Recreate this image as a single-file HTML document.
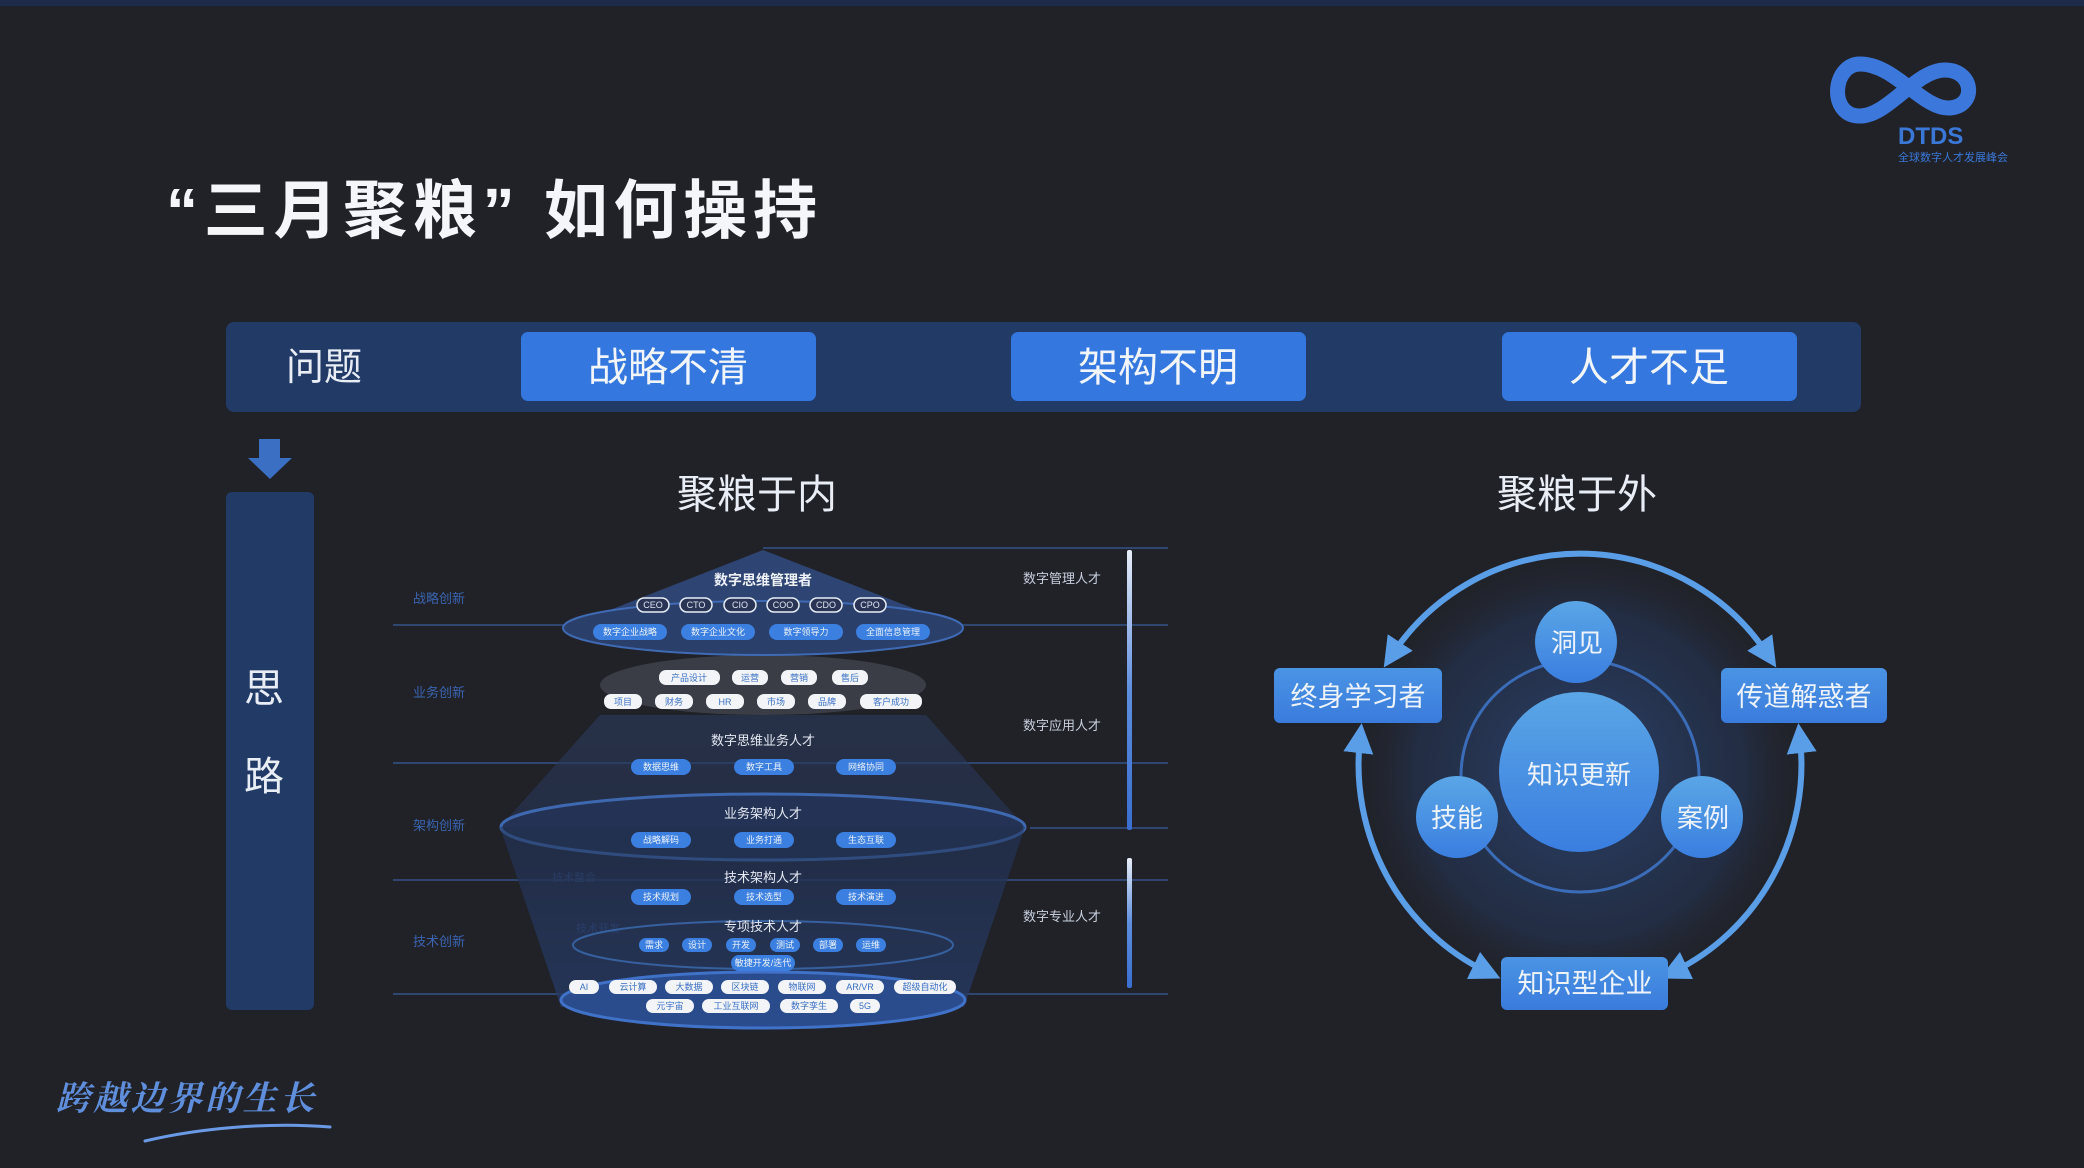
<!DOCTYPE html>
<html><head><meta charset="utf-8">
<style>
html,body{margin:0;padding:0;background:#212228;}
body{width:2084px;height:1168px;overflow:hidden;font-family:"Liberation Sans","Noto Sans CJK SC",sans-serif;}
svg{display:block}
</style></head><body>
<svg width="2084" height="1168" viewBox="0 0 2084 1168" xmlns="http://www.w3.org/2000/svg" font-family="Liberation Sans, Noto Sans CJK SC, sans-serif">
<defs>
<radialGradient id="glow" cx="50%" cy="50%" r="50%">
<stop offset="0" stop-color="#2c4470" stop-opacity="0.9"/>
<stop offset="0.7" stop-color="#243556" stop-opacity="0.6"/>
<stop offset="1" stop-color="#212228" stop-opacity="0"/>
</radialGradient>
<linearGradient id="ball" x1="0" y1="0" x2="0" y2="1">
<stop offset="0" stop-color="#5aa6e6"/><stop offset="1" stop-color="#3a7ee0"/>
</linearGradient>
<linearGradient id="box" x1="0" y1="0" x2="0" y2="1">
<stop offset="0" stop-color="#4a94e4"/><stop offset="1" stop-color="#3a7bdc"/>
</linearGradient>
<linearGradient id="vbar" x1="0" y1="0" x2="0" y2="1">
<stop offset="0" stop-color="#e8eef8"/><stop offset="0.5" stop-color="#5f8ede"/><stop offset="1" stop-color="#3a6ed0"/>
</linearGradient>
<linearGradient id="pyr" x1="0" y1="0" x2="0" y2="1">
<stop offset="0" stop-color="#2a3a5c"/><stop offset="0.5" stop-color="#243254"/><stop offset="1" stop-color="#2d4a86"/>
</linearGradient>
<marker id="ah" viewBox="0 0 10 10" refX="5" refY="5" markerWidth="5" markerHeight="5" orient="auto-start-reverse">
<path d="M0,0 L10,5 L0,10 z" fill="#5a9ee8"/>
</marker>
</defs>

<rect x="0" y="0" width="2084" height="6" fill="#1d2b4a"/>

<!-- Title -->
<text x="166" y="233" font-size="64" font-weight="bold" fill="#f4f6fa" textLength="651" lengthAdjust="spacing">“三月聚粮” 如何操持</text>

<!-- Logo -->
<path d="M1860,64 C1833,64 1828,114 1858,116 C1887,118 1915,70 1945,70 C1974,70 1977,106 1950,108 C1923,110 1895,64 1860,64 Z" fill="none" stroke="#3c78dc" stroke-width="15"/>
<text x="1898" y="144" font-size="24" font-weight="bold" fill="#3a78d8">DTDS</text>
<text x="1898" y="161" font-size="11" fill="#3a78d8">全球数字人才发展峰会</text>

<!-- Problem bar -->
<rect x="226" y="322" width="1635" height="90" rx="8" fill="#213a66"/>
<text x="286" y="380" font-size="38" fill="#e8edf6">问题</text>
<rect x="521" y="332" width="295" height="69" rx="7" fill="#3477de"/>
<text x="668" y="381" font-size="40" fill="#f2f5fb" text-anchor="middle">战略不清</text>
<rect x="1011" y="332" width="295" height="69" rx="7" fill="#3477de"/>
<text x="1158" y="381" font-size="40" fill="#f2f5fb" text-anchor="middle">架构不明</text>
<rect x="1502" y="332" width="295" height="69" rx="7" fill="#3477de"/>
<text x="1649" y="381" font-size="40" fill="#f2f5fb" text-anchor="middle">人才不足</text>

<!-- down arrow and pillar -->
<path d="M259,439 L280,439 L280,458 L292,458 L270,479 L248,458 L259,458 Z" fill="#3a6fc4"/>
<rect x="226" y="492" width="88" height="518" rx="6" fill="#213a66"/>
<text x="264" y="702" font-size="40" fill="#e8edf6" text-anchor="middle">思</text>
<text x="264" y="790" font-size="40" fill="#e8edf6" text-anchor="middle">路</text>

<text x="757" y="508" font-size="40" fill="#e8edf6" text-anchor="middle">聚粮于内</text>
<text x="1577" y="508" font-size="40" fill="#e8edf6" text-anchor="middle">聚粮于外</text>

<!-- Pyramid guide lines -->
<g stroke="#2e4670" stroke-width="2">
<line x1="763" y1="548" x2="1168" y2="548"/>
<line x1="393" y1="625" x2="1168" y2="625"/>
<line x1="393" y1="763" x2="1168" y2="763"/>
<line x1="1030" y1="828" x2="1168" y2="828"/>
<line x1="393" y1="880" x2="1168" y2="880"/>
<line x1="393" y1="994" x2="1168" y2="994"/>
</g>
<rect x="1127" y="550" width="5" height="280" rx="2" fill="url(#vbar)"/>
<rect x="1127" y="858" width="5" height="130" rx="2" fill="url(#vbar)"/>
<g font-size="13" fill="#c8d0de">
<text x="1023" y="583">数字管理人才</text>
<text x="1023" y="730">数字应用人才</text>
<text x="1023" y="921">数字专业人才</text>
</g>
<g font-size="13" fill="#3a64b0">
<text x="413" y="603">战略创新</text>
<text x="413" y="697">业务创新</text>
<text x="413" y="830">架构创新</text>
<text x="413" y="946">技术创新</text>
<text x="530" y="828" font-size="11">业务整合</text>
<text x="552" y="881" font-size="11">技术整合</text>
<text x="576" y="932" font-size="11">技术开发</text>
</g>

<!-- pyramid body -->
<path d="M600,715 L926,715 L1025,827 L964,1007 L561,1007 L500,827 Z" fill="url(#pyr)" opacity="0.6"/>
<ellipse cx="763" cy="827" rx="262" ry="33" fill="#243355" stroke="#3e68b0" stroke-width="3"/>
<path d="M500,827 L561,1007 L964,1007 L1025,827" fill="#22304e" opacity="0.5"/>
<ellipse cx="763" cy="1000" rx="202" ry="28" fill="#2b4c8c" stroke="#3f72c8" stroke-width="3"/>
<ellipse cx="763" cy="945" rx="190" ry="24" fill="none" stroke="#36609e" stroke-width="2"/>
<ellipse cx="763" cy="685" rx="163" ry="30" fill="#3a3d46"/>
<path d="M763,550 L564,628 L964,628 Z" fill="#2e4472"/>
<ellipse cx="763" cy="628" rx="200" ry="27" fill="#2a3f6a" stroke="#3f6ab4" stroke-width="2"/>
<text x="763" y="585" font-size="14" font-weight="bold" fill="#eef2f8" text-anchor="middle">数字思维管理者</text>
<text x="763" y="745" font-size="13" fill="#e4e9f2" text-anchor="middle">数字思维业务人才</text>
<text x="763" y="818" font-size="13" fill="#e4e9f2" text-anchor="middle">业务架构人才</text>
<text x="763" y="882" font-size="13" fill="#e4e9f2" text-anchor="middle">技术架构人才</text>
<text x="763" y="931" font-size="13" fill="#e4e9f2" text-anchor="middle">专项技术人才</text>

<g font-size="9" text-anchor="middle">
<g fill="#2a3556" stroke="#e8eef8" stroke-width="1.5">
<rect x="637" y="598" width="32" height="14" rx="7"/><rect x="680" y="598" width="32" height="14" rx="7"/><rect x="724" y="598" width="32" height="14" rx="7"/><rect x="767" y="598" width="32" height="14" rx="7"/><rect x="810" y="598" width="32" height="14" rx="7"/><rect x="854" y="598" width="32" height="14" rx="7"/>
</g>
<g fill="#dfe6f2"><text x="653" y="608">CEO</text><text x="696" y="608">CTO</text><text x="740" y="608">CIO</text><text x="783" y="608">COO</text><text x="826" y="608">CDO</text><text x="870" y="608">CPO</text></g>
<g fill="#3b7fe0"><rect x="593" y="624" width="74" height="16" rx="8"/><rect x="681" y="624" width="74" height="16" rx="8"/><rect x="769" y="624" width="74" height="16" rx="8"/><rect x="856" y="624" width="74" height="16" rx="8"/></g>
<g fill="#eef3fb"><text x="630" y="635">数字企业战略</text><text x="718" y="635">数字企业文化</text><text x="806" y="635">数字领导力</text><text x="893" y="635">全面信息管理</text></g>
<g fill="#f2f4f8"><rect x="659" y="670" width="61" height="15" rx="7"/><rect x="732" y="670" width="36" height="15" rx="7"/><rect x="781" y="670" width="36" height="15" rx="7"/><rect x="832" y="670" width="36" height="15" rx="7"/>
<rect x="604" y="694" width="38" height="15" rx="7"/><rect x="655" y="694" width="38" height="15" rx="7"/><rect x="706" y="694" width="38" height="15" rx="7"/><rect x="757" y="694" width="38" height="15" rx="7"/><rect x="808" y="694" width="38" height="15" rx="7"/><rect x="860" y="694" width="62" height="15" rx="7"/></g>
<g fill="#3a6fc4"><text x="689" y="681">产品设计</text><text x="750" y="681">运营</text><text x="799" y="681">营销</text><text x="850" y="681">售后</text>
<text x="623" y="705">项目</text><text x="674" y="705">财务</text><text x="725" y="705">HR</text><text x="776" y="705">市场</text><text x="827" y="705">品牌</text><text x="891" y="705">客户成功</text></g>
<g fill="#3b7fe0">
<rect x="631" y="759" width="60" height="16" rx="8"/><rect x="734" y="759" width="60" height="16" rx="8"/><rect x="836" y="759" width="60" height="16" rx="8"/>
<rect x="631" y="832" width="60" height="16" rx="8"/><rect x="734" y="832" width="60" height="16" rx="8"/><rect x="836" y="832" width="60" height="16" rx="8"/>
<rect x="631" y="889" width="60" height="16" rx="8"/><rect x="734" y="889" width="60" height="16" rx="8"/><rect x="836" y="889" width="60" height="16" rx="8"/>
<rect x="639" y="938" width="30" height="14" rx="7"/><rect x="682" y="938" width="30" height="14" rx="7"/><rect x="726" y="938" width="30" height="14" rx="7"/><rect x="770" y="938" width="30" height="14" rx="7"/><rect x="813" y="938" width="30" height="14" rx="7"/><rect x="856" y="938" width="30" height="14" rx="7"/>
<rect x="731" y="955" width="64" height="16" rx="8"/>
</g>
<g fill="#eef3fb">
<text x="661" y="770">数据思维</text><text x="764" y="770">数字工具</text><text x="866" y="770">网络协同</text>
<text x="661" y="843">战略解码</text><text x="764" y="843">业务打通</text><text x="866" y="843">生态互联</text>
<text x="661" y="900">技术规划</text><text x="764" y="900">技术选型</text><text x="866" y="900">技术演进</text>
<text x="654" y="948">需求</text><text x="697" y="948">设计</text><text x="741" y="948">开发</text><text x="785" y="948">测试</text><text x="828" y="948">部署</text><text x="871" y="948">运维</text>
<text x="763" y="966">敏捷开发/迭代</text>
</g>
<g fill="#f2f4f8">
<rect x="569" y="980" width="30" height="14" rx="7"/><rect x="609" y="980" width="48" height="14" rx="7"/><rect x="665" y="980" width="48" height="14" rx="7"/><rect x="721" y="980" width="48" height="14" rx="7"/><rect x="778" y="980" width="48" height="14" rx="7"/><rect x="836" y="980" width="48" height="14" rx="7"/><rect x="894" y="980" width="62" height="14" rx="7"/>
<rect x="646" y="999" width="48" height="14" rx="7"/><rect x="702" y="999" width="68" height="14" rx="7"/><rect x="780" y="999" width="58" height="14" rx="7"/><rect x="850" y="999" width="30" height="14" rx="7"/>
</g>
<g fill="#3a6fc4">
<text x="584" y="990">AI</text><text x="633" y="990">云计算</text><text x="689" y="990">大数据</text><text x="745" y="990">区块链</text><text x="802" y="990">物联网</text><text x="860" y="990">AR/VR</text><text x="925" y="990">超级自动化</text>
<text x="670" y="1009">元宇宙</text><text x="736" y="1009">工业互联网</text><text x="809" y="1009">数字孪生</text><text x="865" y="1009">5G</text>
</g>
</g>

<!-- Right circle diagram -->
<circle cx="1580" cy="775" r="235" fill="url(#glow)"/>
<g fill="none" stroke="#5a9ee8" stroke-width="6" marker-start="url(#ah)" marker-end="url(#ah)">
<path d="M1392,655 A225,225 0 0 1 1768,655"/>
<path d="M1360,738 A225,230 0 0 0 1487,972"/>
<path d="M1800,738 A225,230 0 0 1 1673,972"/>
</g>
<ellipse cx="1580" cy="776" rx="119" ry="116" fill="none" stroke="#3a6cb8" stroke-width="3"/>
<circle cx="1579" cy="772" r="80" fill="url(#ball)"/>
<circle cx="1576" cy="642" r="41" fill="url(#ball)"/>
<circle cx="1457" cy="817" r="41" fill="url(#ball)"/>
<circle cx="1702" cy="817" r="41" fill="url(#ball)"/>
<g fill="#eef3fb" text-anchor="middle">
<text x="1579" y="784" font-size="26">知识更新</text>
<text x="1577" y="652" font-size="26">洞见</text>
<text x="1457" y="827" font-size="26">技能</text>
<text x="1703" y="827" font-size="26">案例</text>
</g>
<rect x="1274" y="668" width="168" height="55" rx="6" fill="url(#box)"/>
<rect x="1721" y="668" width="166" height="55" rx="6" fill="url(#box)"/>
<rect x="1501" y="957" width="167" height="53" rx="6" fill="url(#box)"/>
<g fill="#eef3fb" text-anchor="middle" font-size="27">
<text x="1358" y="706">终身学习者</text>
<text x="1804" y="706">传道解惑者</text>
<text x="1585" y="993">知识型企业</text>
</g>

<!-- signature -->
<text x="56" y="1110" font-size="34" font-style="italic" font-weight="bold" font-family="Noto Serif CJK SC, serif" fill="#5f8fdc" textLength="258" lengthAdjust="spacing">跨越边界的生长</text>
<path d="M145,1141 C200,1128 270,1122 330,1127" fill="none" stroke="#6a9ae6" stroke-width="3" stroke-linecap="round"/>
</svg>
</body></html>
